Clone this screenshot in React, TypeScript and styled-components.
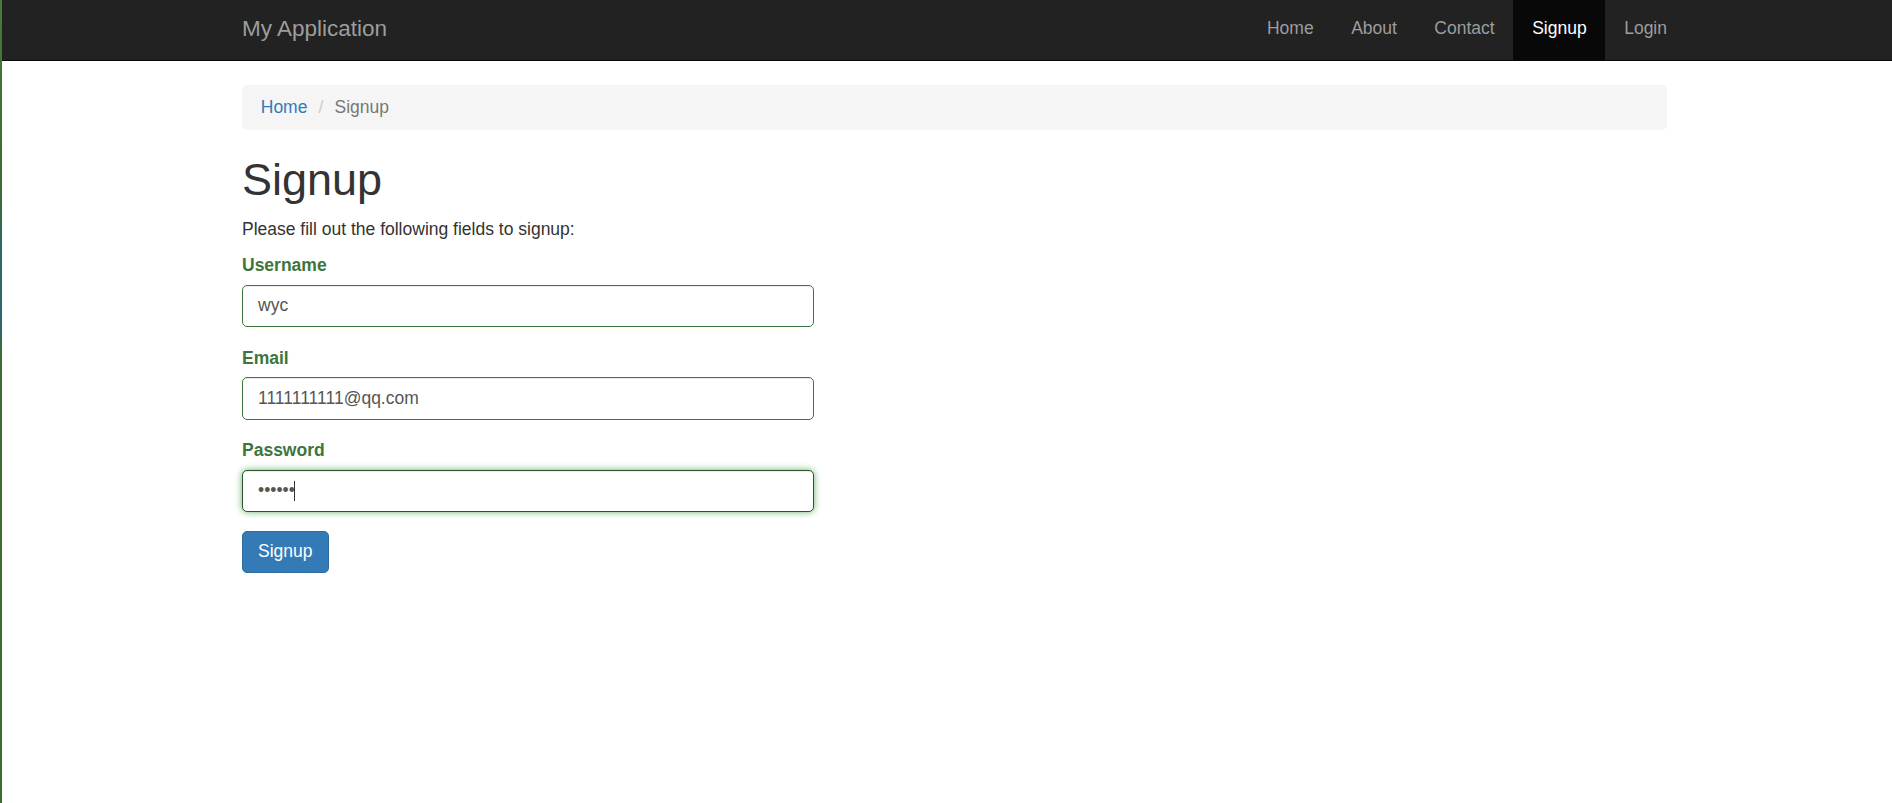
import React from "react";
import styled, { createGlobalStyle } from "styled-components";

const Global = createGlobalStyle`
  html, body {
    margin: 0;
    padding: 0;
    background: #ffffff;
  }
  body {
    font-family: "Liberation Sans", Helvetica, Arial, sans-serif;
    font-size: 17.5px;
    line-height: 25px;
    color: #333333;
  }
  * { box-sizing: border-box; }
`;

const Page = styled.div`
  display: flex;
  min-height: 100vh;
  background: #ffffff;
`;

const EdgeStrip = styled.div`
  flex: 0 0 2px;
  background: linear-gradient(
    to bottom,
    #4b7a34 0px,
    #3f6e2d 150px,
    #3a6b3c 200px,
    #2d6a60 240px,
    #2b6670 320px,
    #3b6d34 355px,
    #3e6c2d 600px,
    #3d6a2f 100%
  );
`;

const Main = styled.div`
  flex: 1 1 auto;
  min-width: 0;
`;

const Navbar = styled.nav`
  height: 61px;
  background: #222222;
  border-bottom: 1px solid #080808;
`;

const NavInner = styled.div`
  width: 1425px;
  margin-left: 240px;
  height: 60px;
  display: flex;
  justify-content: space-between;
  align-items: stretch;
`;

const Brand = styled.a`
  font-size: 22.5px;
  line-height: 25px;
  padding-top: 16px;
  color: #9d9d9d;
  text-decoration: none;
`;

const NavList = styled.ul`
  display: flex;
  list-style: none;
  margin: 0 -18.75px 0 0;
  padding: 0;
`;

const NavLink = styled.a<{ $active?: boolean }>`
  display: block;
  height: 60px;
  padding: 16px 18.75px 0;
  line-height: 25px;
  text-decoration: none;
  color: ${(p) => (p.$active ? "#ffffff" : "#9d9d9d")};
  background: ${(p) => (p.$active ? "#080808" : "transparent")};
`;

const Content = styled.main`
  width: 1425px;
  margin-left: 240px;
  padding-top: 24px;
`;

const Breadcrumb = styled.ol`
  display: flex;
  list-style: none;
  margin: 0;
  padding: 10px 18.75px;
  background: #f5f5f5;
  border-radius: 5px;
  line-height: 25px;
`;

const CrumbLink = styled.a`
  color: #337ab7;
  text-decoration: none;
`;

const CrumbSep = styled.span`
  color: #cccccc;
  padding: 0 11.1px;
`;

const CrumbCurrent = styled.li`
  color: #777777;
`;

const Title = styled.h1`
  margin: 25px 0 12.5px;
  font-size: 45px;
  line-height: 49.5px;
  font-weight: 500;
  color: #333333;
`;

const Lead = styled.p`
  margin: 0 0 11.25px;
`;

const Form = styled.form`
  width: 572px;
`;

const Field = styled.div`
  margin-bottom: 18.75px;
`;

const Label = styled.label`
  display: inline-block;
  margin-bottom: 6.25px;
  font-weight: bold;
  color: #3c763d;
`;

const InputWrap = styled.div`
  position: relative;
`;

const Input = styled.input<{ $focused?: boolean }>`
  display: block;
  width: 100%;
  height: 42.5px;
  padding: 7.5px 15px;
  font-family: inherit;
  font-size: 17.5px;
  line-height: 25px;
  color: #555555;
  background: #ffffff;
  border: 1px solid ${(p) => (p.$focused ? "#2b542c" : "#3c763d")};
  border-radius: 5px;
  outline: none;
  caret-color: transparent;
  box-shadow: ${(p) =>
    p.$focused
      ? "inset 0 1px 1px rgba(0,0,0,.075), 0 0 7.5px #67b168"
      : "inset 0 1px 1px rgba(0,0,0,.075)"};
`;

const Caret = styled.span`
  position: absolute;
  left: 52px;
  top: 11px;
  width: 1px;
  height: 20px;
  background: #333333;
`;

const PrimaryButton = styled.button`
  display: inline-block;
  padding: 7.5px 15px;
  font-family: inherit;
  font-size: 17.5px;
  line-height: 25px;
  color: #ffffff;
  background: #337ab7;
  border: 1px solid #2e6da4;
  border-radius: 5px;
  cursor: pointer;
`;

const navItems = [
  { label: "Home", active: false },
  { label: "About", active: false },
  { label: "Contact", active: false },
  { label: "Signup", active: true },
  { label: "Login", active: false },
];

export default function App() {
  return (
    <>
      <Global />
      <Page>
        <EdgeStrip />
        <Main>
          <Navbar>
            <NavInner>
              <Brand href="#">My Application</Brand>
              <NavList>
                {navItems.map((item) => (
                  <li key={item.label}>
                    <NavLink href="#" $active={item.active}>
                      {item.label}
                    </NavLink>
                  </li>
                ))}
              </NavList>
            </NavInner>
          </Navbar>
          <Content>
            <Breadcrumb>
              <li>
                <CrumbLink href="#">Home</CrumbLink>
              </li>
              <CrumbSep>/</CrumbSep>
              <CrumbCurrent>Signup</CrumbCurrent>
            </Breadcrumb>
            <Title>Signup</Title>
            <Lead>Please fill out the following fields to signup:</Lead>
            <Form onSubmit={(e) => e.preventDefault()}>
              <Field>
                <Label htmlFor="username">Username</Label>
                <Input id="username" type="text" defaultValue="wyc" readOnly />
              </Field>
              <Field>
                <Label htmlFor="email">Email</Label>
                <Input id="email" type="text" defaultValue="1111111111@qq.com" readOnly />
              </Field>
              <Field>
                <Label htmlFor="password">Password</Label>
                <InputWrap>
                  <Input id="password" type="password" defaultValue="123456" readOnly $focused />
                  <Caret />
                </InputWrap>
              </Field>
              <PrimaryButton type="submit">Signup</PrimaryButton>
            </Form>
          </Content>
        </Main>
      </Page>
    </>
  );
}
